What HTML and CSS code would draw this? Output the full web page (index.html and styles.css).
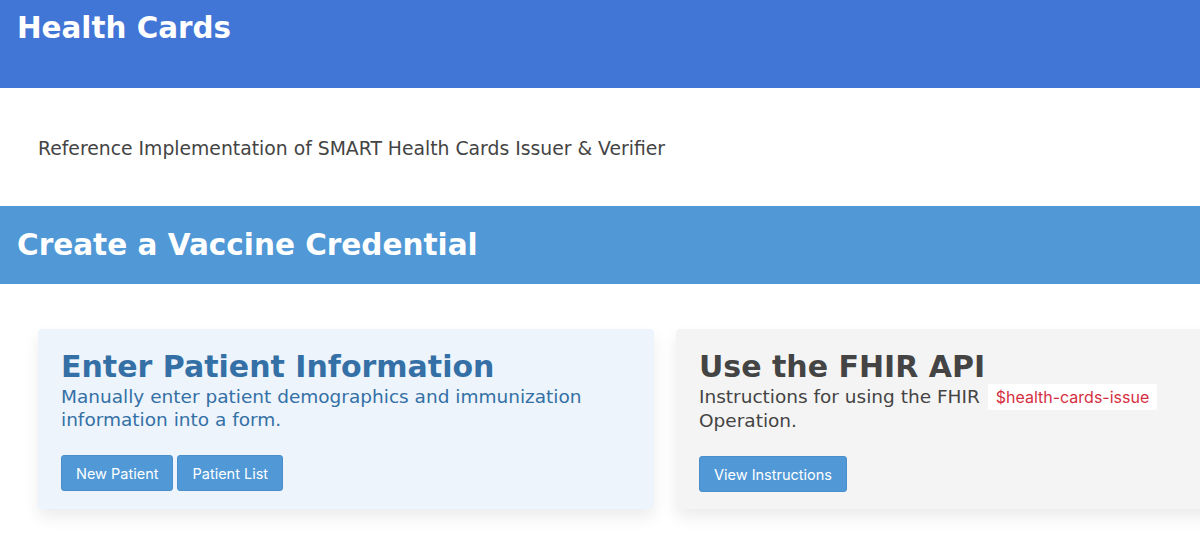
FILE: index.html
```html
<!DOCTYPE html>
<html lang="en">
<head>
<meta charset="utf-8">
<title>Health Cards</title>
<link rel="stylesheet" href="styles.css">
</head>
<body>
<header class="topbar">
  <h1 class="topbar-title">Health Cards</h1>
</header>
<section class="intro">
  <p class="intro-text">Reference Implementation of SMART Health Cards Issuer &amp; Verifier</p>
</section>
<section class="band">
  <h2 class="band-title">Create a Vaccine Credential</h2>
</section>
<main class="cards">
  <div class="card card-blue">
    <h3 class="card-title">Enter Patient Information</h3>
    <p class="card-text">Manually enter patient demographics and immunization information into a form.</p>
    <div class="card-actions">
      <button class="btn">New Patient</button>
      <button class="btn">Patient List</button>
    </div>
  </div>
  <div class="card card-grey">
    <h3 class="card-title">Use the FHIR API</h3>
    <p class="card-text">Instructions for using the FHIR <code class="code">$health-cards-issue</code> Operation.</p>
    <div class="card-actions">
      <button class="btn">View Instructions</button>
    </div>
  </div>
</main>
</body>
</html>
```
FILE: styles.css
```css
html, body {
  margin: 0;
  padding: 0;
  overflow: hidden;
}
body {
  font-family: "DejaVu Sans", Verdana, sans-serif;
  background: #ffffff;
  color: #444444;
  width: 1200px;
}
.topbar {
  background: #4175d6;
  height: 88px;
  padding: 0 17px;
  box-sizing: border-box;
}
.topbar-title {
  margin: 0;
  padding-top: 10px;
  color: #ffffff;
  font-size: 29.4px;
  font-weight: bold;
  line-height: 36px;
}
.intro {
  height: 118px;
  padding: 0 38px;
  box-sizing: border-box;
  display: flex;
  align-items: center;
}
.intro-text {
  margin: 0;
  padding-top: 2px;
  font-size: 18.8px;
  color: #444444;
}
.band {
  background: #5098d6;
  height: 78px;
  padding: 0 17px;
  box-sizing: border-box;
  display: flex;
  align-items: center;
}
.band-title {
  margin: 0;
  color: #ffffff;
  font-size: 29.5px;
  font-weight: bold;
}
.cards {
  display: flex;
  gap: 22px;
  padding: 45px 38px;
}
.card {
  flex: 0 0 616px;
  box-sizing: border-box;
  height: 180px;
  padding: 19px 23px;
  border-radius: 4px;
  box-shadow: 0 8px 16px rgba(0, 0, 0, 0.08);
}
.card-blue {
  background: #edf4fb;
}
.card-blue .card-title,
.card-blue .card-text {
  color: #3470a6;
}
.card-grey {
  background: #f4f4f4;
}
.card-title {
  margin: 0;
  font-size: 30px;
  font-weight: bold;
  line-height: 37px;
  color: #444444;
}
.card-text {
  margin: 0;
  max-width: 540px;
  font-size: 18.5px;
  line-height: 23px;
  color: #444444;
}
.code {
  font-family: Inter, "Liberation Sans", sans-serif;
  font-size: 16px;
  color: #d52f3f;
  background: #ffffff;
  padding: 3px 8px;
  margin-left: 2px;
  border-radius: 2px;
}
.card-actions {
  display: flex;
  gap: 4px;
  margin-top: 24px;
}
.btn {
  font-family: Inter, "Liberation Sans", sans-serif;
  font-size: 14.5px;
  color: #ffffff;
  background: #5098d6;
  border: 1px solid #4a8fcb;
  border-radius: 3px;
  height: 36px;
  padding: 0 14px;
  cursor: pointer;
}
```
